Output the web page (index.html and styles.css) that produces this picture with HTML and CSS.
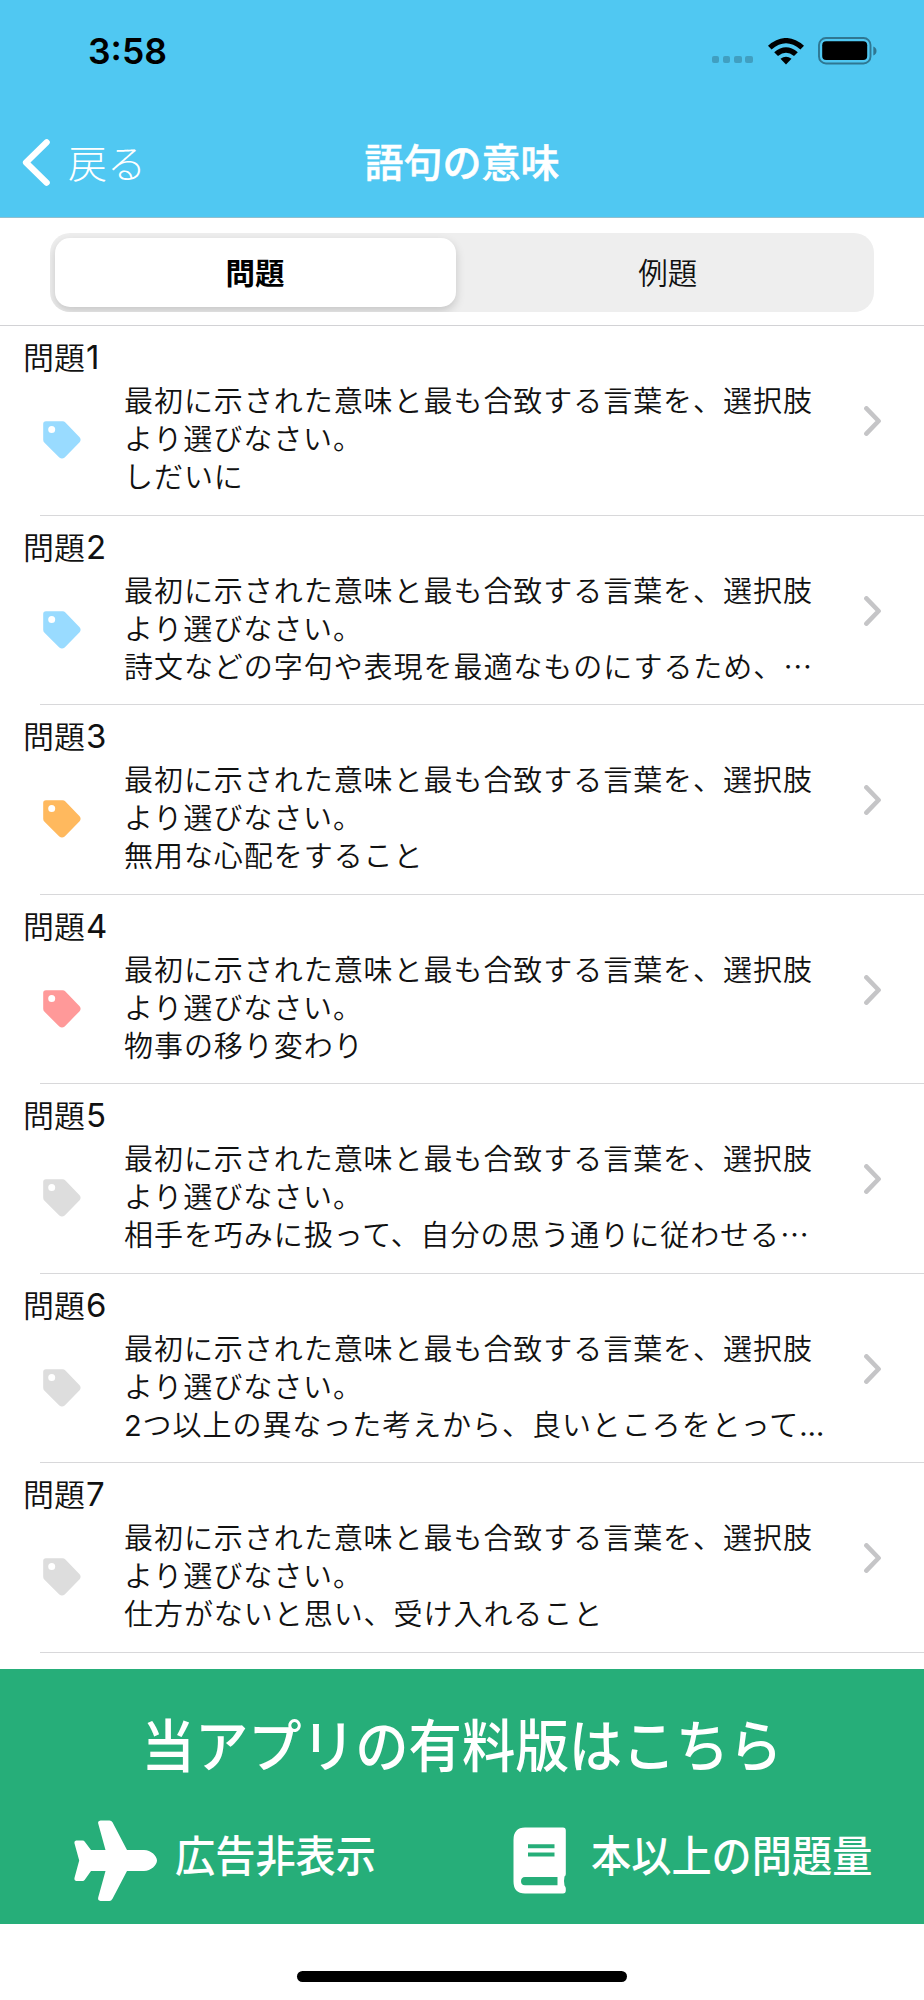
FILE: index.html
```html
<!DOCTYPE html>
<html lang="ja">
<head>
<meta charset="utf-8">
<title>語句の意味</title>
<link rel="stylesheet" href="styles.css">
</head>
<body>
<svg width="0" height="0" class="defs">
  <symbol id="tag" viewBox="0 0 38 38"><path fill-rule="evenodd" d="M3 .3H19.5Q21.2 .3 22.4 1.5L36.6 16.3Q38.6 18.8 36.6 21.2L21.7 36.4Q19 38.6 16.3 36.4L1.5 21.8Q.2 20.5 .2 18.7V3Q.2 .3 3 .3ZM8.7 5.1a3.5 3.5 0 1 0 0 7a3.5 3.5 0 1 0 0-7Z"/></symbol>
  <symbol id="chev" viewBox="0 0 17 30"><path d="M2.4 2.4L14.6 15L2.4 27.6" fill="none" stroke="#c5c5c7" stroke-width="4.6" stroke-linecap="round" stroke-linejoin="round"/></symbol>
</svg>
<header class="header">
  <div class="status">
    <span class="time">3:58</span>
    <div class="indicators">
      <span class="dots"><i></i><i></i><i></i><i></i></span>
      <svg class="wifi" width="36" height="27" viewBox="0 0 36 27"><path d="M0 7.7Q18-7.8 36 7.7L32.4 11.4Q18-.8 3.6 11.4Z"/><path d="M6.2 14.2Q18 4.2 29.8 14.2L26 18Q18 11.4 10 18Z"/><path d="M12.5 20.8Q18 16.8 23.5 20.8L18 26.4Z"/></svg>
      <svg class="battery" width="59" height="28" viewBox="0 0 59 28"><rect x="1" y="1" width="51.5" height="25.5" rx="7" fill="none" stroke="#2f7792" stroke-width="1.9"/><rect x="4.2" y="4.3" width="45" height="18.8" rx="4"/><path d="M55.3 9.5Q58.5 10.5 58.5 14T55.3 18.4Z" fill="#2f7792"/></svg>
    </div>
  </div>
  <nav class="nav">
    <a class="back"><svg width="28" height="47" viewBox="0 0 28 47"><path d="M24.7 3.3L4 23.5L24.7 43.7" fill="none" stroke="#fff" stroke-width="6.2" stroke-linecap="round" stroke-linejoin="round"/></svg><span>戻る</span></a>
    <h1 class="heading">語句の意味</h1>
  </nav>
</header>
<div class="tabs"><div class="segment"><span class="seg seg-on">問題</span><span class="seg seg-off">例題</span></div></div>
<main class="list">
  <section class="row"><h2 class="title">問題<b>1</b></h2><svg class="tag blue"><use href="#tag"/></svg><p class="body">最初に示された意味と最も合致する言葉を、選択肢<br>より選びなさい。<br>しだいに</p><svg class="chev"><use href="#chev"/></svg></section>
  <section class="row"><h2 class="title">問題<b>2</b></h2><svg class="tag blue"><use href="#tag"/></svg><p class="body">最初に示された意味と最も合致する言葉を、選択肢<br>より選びなさい。<br>詩文などの字句や表現を最適なものにするため、…</p><svg class="chev"><use href="#chev"/></svg></section>
  <section class="row"><h2 class="title">問題<b>3</b></h2><svg class="tag orange"><use href="#tag"/></svg><p class="body">最初に示された意味と最も合致する言葉を、選択肢<br>より選びなさい。<br>無用な心配をすること</p><svg class="chev"><use href="#chev"/></svg></section>
  <section class="row"><h2 class="title">問題<b>4</b></h2><svg class="tag red"><use href="#tag"/></svg><p class="body">最初に示された意味と最も合致する言葉を、選択肢<br>より選びなさい。<br>物事の移り変わり</p><svg class="chev"><use href="#chev"/></svg></section>
  <section class="row"><h2 class="title">問題<b>5</b></h2><svg class="tag gray"><use href="#tag"/></svg><p class="body">最初に示された意味と最も合致する言葉を、選択肢<br>より選びなさい。<br>相手を巧みに扱って、自分の思う通りに従わせる…</p><svg class="chev"><use href="#chev"/></svg></section>
  <section class="row"><h2 class="title">問題<b>6</b></h2><svg class="tag gray"><use href="#tag"/></svg><p class="body">最初に示された意味と最も合致する言葉を、選択肢<br>より選びなさい。<br><span class="latin">2</span>つ以上の異なった考えから、良いところをとって<span class="latin">…</span></p><svg class="chev"><use href="#chev"/></svg></section>
  <section class="row"><h2 class="title">問題<b>7</b></h2><svg class="tag gray"><use href="#tag"/></svg><p class="body">最初に示された意味と最も合致する言葉を、選択肢<br>より選びなさい。<br>仕方がないと思い、受け入れること</p><svg class="chev"><use href="#chev"/></svg></section>
</main>
<aside class="banner">
  <div class="banner-title"><span>当アプリの有料版はこちら</span></div>
  <div class="features">
    <svg class="plane" width="83" height="82" viewBox="0 0 83 82"><path d="M26.5 .5H35.5Q37.5 .5 38.5 2.3L53 30H70C77 30 83 36 83 40.5S77 51 70 51H53L38.5 78.7Q37.2 81 35.5 81H26.5Q23.5 80.5 24.2 77.5L31.5 51H17L10.8 59.7Q10 61 8.5 61H2Q0 60.5 .4 58.3L5.2 40.5L.4 23Q0 21 2 20.5H8.5Q10 20.5 10.8 21.8L17 30H31.5L24.2 3.5Q23.5 1 26.5 .5Z" fill="#fff"/></svg>
    <span class="feature">広告非表示</span>
    <svg class="book" width="53" height="67" viewBox="0 0 53 67"><path fill-rule="evenodd" fill="#fff" d="M12 .5H50Q52.8 .5 52.8 3.5V47Q52.8 48.5 51.5 49.5Q50.5 54 51.5 58.5Q52.8 60 52.8 61.5V63.5Q52.8 66.5 50 66.5H12Q.5 66.5 .5 54.5V13Q.5 .5 12 .5ZM15 17.3V21.3H41.5V17.3ZM15 25.5V29.5H41.5V25.5ZM12 50Q8 50.3 8 54.2Q8 58 12 58.3H44.5V50Z"/></svg>
    <span class="feature">本以上の問題量</span>
  </div>
</aside>
<footer class="home"><span class="home-bar"></span></footer>
</body>
</html>
```
FILE: styles.css
```css
* { box-sizing: border-box; }
body { margin: 0; width: 924px; height: 2000px; overflow: hidden; background: #fff; color: #111; font-family: "Noto Sans CJK JP", sans-serif; font-weight: 350; display: flex; flex-direction: column; }
h1, h2, p { margin: 0; font-weight: inherit; }
.defs { display: none; }
.header { flex: none; height: 218px; background: #50c8f2; border-bottom: 1px solid #91bfcf; }
.status { height: 102px; display: flex; justify-content: space-between; padding: 0 47px 0 88px; align-items: center; color: #000; }
.time { font: 600 35.5px/40px Inter, sans-serif; padding-top: 1px; }
.indicators { display: flex; align-items: center; }
.dots { display: flex; gap: 3.7px; margin: 17px 15px 0 0; }
.dots i { width: 7.6px; height: 7.6px; border-radius: 2px; background: #409fc1; }
.wifi { margin-right: 14px; }
.nav { height: 116px; color: #fff; display: grid; grid-template-columns: 1fr auto 1fr; align-items: center; padding: 6px 22px 0; }
.back { display: flex; align-items: center; gap: 18px; font-size: 39px; font-weight: 300; line-height: 50px; margin-bottom: 2px; }
.back span { margin-top: -2px; }
.heading { font-size: 39px; font-weight: 500; line-height: 50px; margin-bottom: 7px; -webkit-text-stroke: .5px #fff; }
.tabs { flex: none; height: 108px; padding: 15px 50px 0; border-bottom: 1px solid #d2d2d5; }
.segment { height: 79px; background: #eee; border-radius: 20px; padding: 5px 0 5px 4.5px; display: grid; grid-template-columns: 401px 1fr; overflow: hidden; }
.seg { display: flex; align-items: center; justify-content: center; font-size: 29.5px; padding-bottom: 4px; }
.seg-off { padding-left: 6px; }
.seg-on { font-weight: 600; color: #000; background: #fff; border-radius: 15px; box-shadow: 0 4px 10px rgba(0,0,0,.17); }
.list { flex: none; height: 1343px; }
.row { height: 189.57px; display: grid; grid-template-columns: 124px 1fr 60px; grid-template-rows: 43px 1fr; padding-top: 11px; background: linear-gradient(#d8d8da, #d8d8da) 40px 100% / 100% 1px no-repeat; }
.title { grid-column: 1 / 4; padding-left: 23px; font-size: 31px; line-height: 40px; margin-top: -1px; }
.title b { font: 400 33px/30px Inter, sans-serif; margin-left: 1px; }
.tag { width: 38px; height: 38px; margin: 41px 0 0 43px; }
.blue { fill: #99dbff; }
.orange { fill: #ffb95e; }
.red { fill: #ff9999; }
.gray { fill: #ddd; }
.body { font-size: 29px; letter-spacing: .95px; line-height: 38px; white-space: nowrap; }
.latin { font-family: Inter, sans-serif; font-weight: 400; line-height: 30px; letter-spacing: .9px; }
.chev { width: 17px; height: 30px; margin-top: 26px; }
.banner { flex: none; height: 255px; background: #26ae79; color: #fff; font-weight: 500; }
.banner-title { height: 152px; display: flex; justify-content: center; padding-top: 33px; }
.banner-title span { font-size: 57px; line-height: 80px; white-space: nowrap; transform: scaleX(.937); }
.features { display: flex; align-items: flex-start; padding-left: 74px; }
.feature { font-size: 43px; line-height: 60px; margin-top: 2px; white-space: nowrap; transform: scaleX(.935); transform-origin: left; }
.plane { margin: -1px 18px 0 0; }
.plane + .feature { width: 338px; flex: none; }
.book { flex: none; margin: 6px 25px 0 0; }
.home { flex: 1; display: flex; justify-content: center; align-items: flex-start; padding-top: 47px; }
.home-bar { width: 330px; height: 11px; border-radius: 6px; background: #000; }
```
